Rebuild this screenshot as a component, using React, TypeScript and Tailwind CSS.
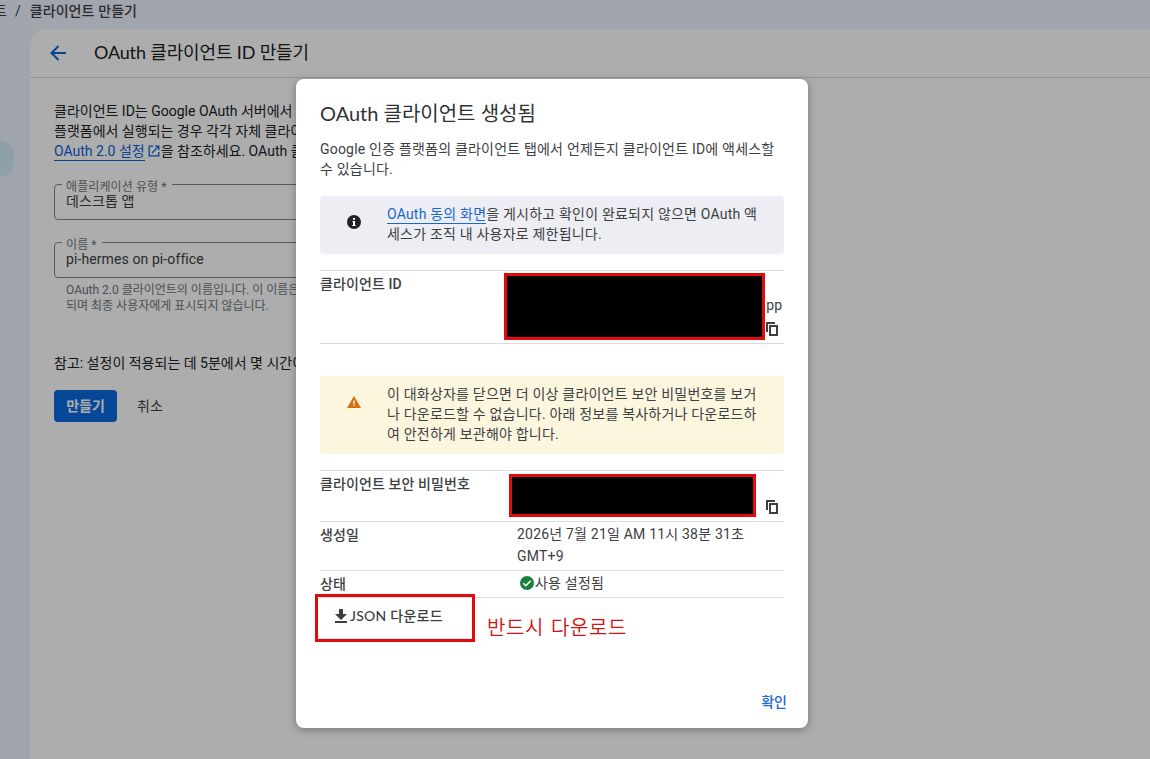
import type { ReactNode } from "react";

const body = "font-['Roboto','Noto_Sans_CJK_KR',sans-serif]";
const display = "font-['Lato','Noto_Sans_CJK_KR',sans-serif]";

function CopyIcon() {
  return (
    <svg viewBox="0 0 12 14" className="h-[14px] w-[12px] shrink-0" fill="none" stroke="#3c4043" strokeWidth="2">
      <path d="M1 10V1h8" />
      <path d="M4 4h7v9H4z" />
    </svg>
  );
}

function Field({ label, value, children }: { label: string; value: string; children?: ReactNode }) {
  return (
    <div>
      <div className="relative h-9 rounded border border-[#80868b] pt-[6px] pl-[11px]">
        <span className="absolute -top-[6px] left-[7px] bg-white px-1 pr-[5px] text-[12px] leading-4 tracking-[0.1px] whitespace-nowrap text-[#70757a]">
          {label}
        </span>
        <div className="leading-5 tracking-[0.1px] text-[#3c4043]">{value}</div>
      </div>
      {children}
    </div>
  );
}

function Row({ label, height, children }: { label: string; height: string; children: ReactNode }) {
  return (
    <div className={`flex border-b border-[#dadce0] ${height}`}>
      <div className="w-[197px] shrink-0 pt-[3px] leading-5 font-medium tracking-[0.1px] text-[#3c4043]">{label}</div>
      {children}
    </div>
  );
}

function Background() {
  return (
    <div className="flex h-full flex-col bg-[#eef3ff]">
      <div className="flex h-[29px] shrink-0 items-start gap-[9px] pt-[1px] leading-5 text-[#3c4043]">
        <span className="-ml-[6px]">트</span>
        <span className="-ml-px">/</span>
        <span className="font-medium tracking-[0.1px]">클라이언트 만들기</span>
      </div>
      <div className="flex flex-1">
        <div className="w-[30px] shrink-0 pt-[112px]">
          <div className="h-9 w-[14px] rounded-r-[14px] bg-[#d3ecfb]" />
        </div>
        <main className="flex-1 rounded-tl-[18px] bg-white">
          <header className="flex h-[49px] items-center border-b border-[#dadce0] pl-5">
            <svg viewBox="0 0 16 16" className="h-4 w-4" fill="none" stroke="#0b63d8" strokeWidth="2">
              <path d="M16 8H1.5M8.5 1L1.5 8l7 7" />
            </svg>
            <h1 className={`mb-[2px] ml-7 text-[18px] leading-6 tracking-[-0.15px] text-[#202124] ${display}`}>
              OAuth 클라이언트 ID 만들기
            </h1>
          </header>
          <div className="w-[266px] overflow-hidden pt-[23px] pl-6">
            <div className="leading-5 whitespace-nowrap">
              <p>클라이언트 ID는 Google OAuth 서버에서</p>
              <p>플랫폼에서 실행되는 경우 각각 자체 클라이</p>
              <p className="flex">
                <a className="h-5 border-b border-[#0b63d8] text-[#0b63d8]">OAuth 2.0 설정</a>
                <svg viewBox="0 0 12 12" className="mt-1 mr-px ml-[3px] h-3 w-3 shrink-0" fill="none" stroke="#0b63d8" strokeWidth="1.3">
                  <path d="M5 1.2H1.2v9.6h9.6V7M7 1.2h3.8V5M10.6 1.4L4 8" />
                </svg>
                <span>을 참조하세요. OAuth 클</span>
              </p>
            </div>
            <div className="mt-[23px] flex w-[400px] flex-col gap-[22px]">
              <Field label="애플리케이션 유형 *" value="데스크톱 앱" />
              <Field label="이름 *" value="pi-hermes on pi-office">
                <div className="mt-1 pl-3 text-[12px] leading-4 whitespace-nowrap text-[#70757a]">
                  <p>OAuth 2.0 클라이언트의 이름입니다. 이 이름은</p>
                  <p>되며 최종 사용자에게 표시되지 않습니다.</p>
                </div>
              </Field>
            </div>
            <p className="mt-[39px] leading-5 whitespace-nowrap">참고: 설정이 적용되는 데 5분에서 몇 시간이</p>
            <div className="mt-[17px] flex gap-2">
              <button className="h-8 w-[63px] rounded bg-[#0b69e0] font-bold text-white">만들기</button>
              <button className="h-8 px-3 text-[#3c4043]">취소</button>
            </div>
          </div>
        </main>
      </div>
    </div>
  );
}

function Dialog() {
  return (
    <section className="relative h-[649px] w-[512px] rounded-lg bg-white px-6 text-[#3c4043] shadow-[0_2px_8px_rgba(0,0,0,0.3)]">
      <h2 className={`pt-5 text-[20px] leading-7 text-[#303134] ${display}`}>OAuth 클라이언트 생성됨</h2>
      <p className="mt-3 leading-5 tracking-[0.2px] whitespace-nowrap">
        Google 인증 플랫폼의 클라이언트 탭에서 언제든지 클라이언트 ID에 액세스할
        <br />수 있습니다.
      </p>
      <div className="mt-[17px] flex h-[58px] rounded bg-[#eceef3] pt-2 pl-[27px]">
        <svg viewBox="0 0 14 14" className="mt-[11px] h-[14px] w-[14px]">
          <circle cx="7" cy="7" r="7" fill="#202124" />
          <path d="M6 3h2v1.7H6zM5.5 6h2.5v4h.7v1H5.3v-1H6V7h-.5z" fill="#fff" />
        </svg>
        <p className="ml-[26px] leading-5 tracking-[0.2px] whitespace-nowrap">
          <a className="inline-block h-5 border-b border-[#1967d2] text-[#1967d2]">OAuth 동의 화면</a>을 게시하고 확인이 완료되지 않으면 OAuth 액
          <br />
          세스가 조직 내 사용자로 제한됩니다.
        </p>
      </div>
      <div className="mt-4 border-t border-[#dadce0]">
        <Row label="클라이언트 ID" height="h-[73px]">
          <div className="flex flex-1 flex-col items-end pt-6">
            <span className="pr-[2px] leading-5">pp</span>
            <div className="mt-[7px] pr-[6px]">
              <CopyIcon />
            </div>
          </div>
        </Row>
      </div>
      <div className="mt-8 flex h-[78px] rounded bg-[#fdf6df] pt-2 pl-[27px]">
        <svg viewBox="0 0 14 12" className="mt-3 h-3 w-[14px]">
          <path d="M7 0l7 12H0z" fill="#d56e0c" />
          <path d="M6.3 4.5h1.4v3.3H6.3zM6.3 8.8h1.4v1.3H6.3z" fill="#fff" />
        </svg>
        <p className="ml-[26px] leading-5 tracking-[0.2px] whitespace-nowrap">
          이 대화상자를 닫으면 더 이상 클라이언트 보안 비밀번호를 보거
          <br />
          나 다운로드할 수 없습니다. 아래 정보를 복사하거나 다운로드하
          <br />여 안전하게 보관해야 합니다.
        </p>
      </div>
      <div className="mt-4 border-t border-[#dadce0]">
        <Row label="클라이언트 보안 비밀번호" height="h-[51px]">
          <div className="flex flex-1 justify-end pt-[29px] pr-[6px]">
            <CopyIcon />
          </div>
        </Row>
        <Row label="생성일" height="h-[49px]">
          <p className="pt-px leading-[22px] tracking-[0.2px] whitespace-nowrap">
            2026년 7월 21일 AM 11시 38분 31초
            <br />
            GMT+9
          </p>
        </Row>
        <Row label="상태" height="h-[27px]">
          <div className="flex pt-[2px] pl-[3px] leading-5 tracking-[0.2px]">
            <svg viewBox="0 0 14 14" className="mt-[3px] mr-px h-[14px] w-[14px]">
              <circle cx="7" cy="7" r="7" fill="#188038" />
              <path d="M3.3 7.2l2.5 2.5 5-5" fill="none" stroke="#fff" strokeWidth="1.6" />
            </svg>
            사용 설정됨
          </div>
        </Row>
      </div>
      <button className="mt-2 flex pl-[15px] leading-5 font-medium">
        <svg viewBox="0 0 12 14" className="mt-[3px] mr-[3px] h-[14px] w-3" fill="#3c4043">
          <path d="M4 0h4v5h4l-6 6-6-6h4zM0 12h12v2H0z" />
        </svg>
        <span className={`tracking-[0.25px] ${display}`}>JSON 다운로드</span>
      </button>
      <div className="mt-[66px] flex justify-end">
        <button className="-mr-[3px] leading-5 font-medium text-[#1967d2]">확인</button>
      </div>

      <div className="absolute top-[194px] left-[208px] h-[67px] w-[261px] border-[3px] border-[#e10b0b] bg-black" />
      <div className="absolute top-[395px] left-[213px] h-[43px] w-[247px] border-[3px] border-[#e10b0b] bg-black" />
      <div className="absolute top-[515px] left-[19px] flex h-12 w-40 items-end border-[3px] border-[#e10b0b]">
        <div className="h-px w-full bg-[#e4e5e7]" />
      </div>
      <div className="absolute top-[535px] left-[191px] text-[20px] leading-7 font-[350] tracking-[0.6px] [word-spacing:1.5px] whitespace-nowrap text-[#d01414]">
        반드시 다운로드
      </div>
    </section>
  );
}

export default function App() {
  return (
    <div className={`relative h-[759px] w-[1150px] overflow-hidden text-[14px] text-[#202124] ${body}`}>
      <Background />
      <div className="absolute inset-0 flex items-start bg-black/32 pt-[79px] pl-[296px]">
        <Dialog />
      </div>
    </div>
  );
}
